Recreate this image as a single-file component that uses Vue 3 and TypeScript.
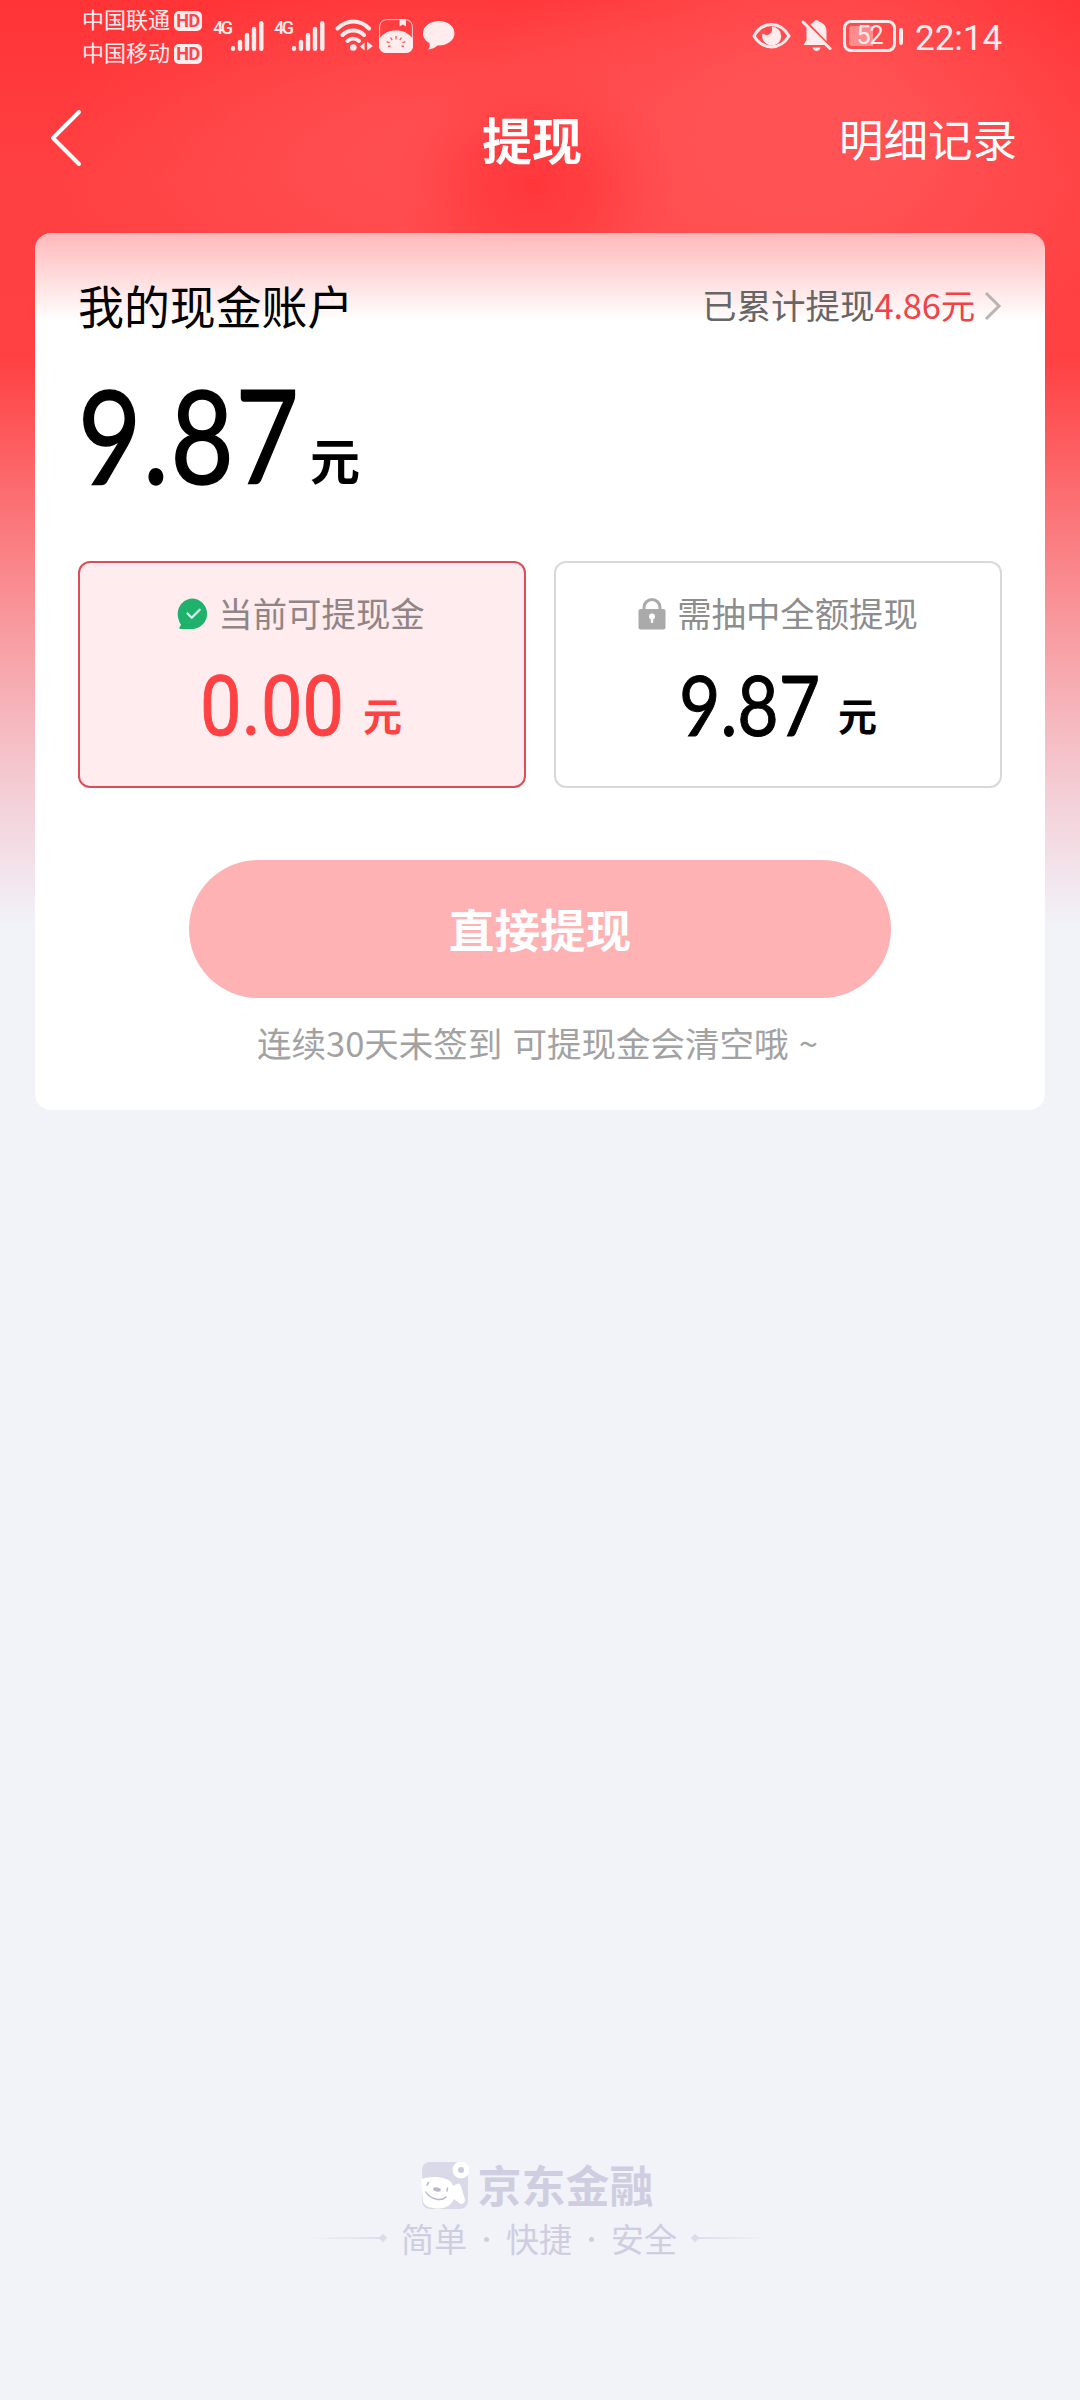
<script setup lang="ts">
interface Account {
  key: string
  label: string
  amount: string
  active: boolean
}

const carriers: string[] = ['中国联通', '中国移动']
const total = '9.87'
const withdrawn = '4.86'
const accounts: Account[] = [
  { key: 'available', label: '当前可提现金', amount: '0.00', active: true },
  { key: 'locked', label: '需抽中全额提现', amount: '9.87', active: false },
]
</script>

<template>
  <main class="page">
    <header class="status">
      <div class="carriers">
        <div v-for="name in carriers" :key="name" class="carrier">
          <span>{{ name }}</span>
          <b class="hd">HD</b>
        </div>
      </div>
      <div v-for="n in 2" :key="n" class="signal">
        <span class="net">4G</span>
        <svg width="35" height="34" viewBox="0 0 35 34" stroke="#ffecec" stroke-width="4.4" stroke-linecap="round">
          <path d="M3 29.8v-.6M10 29.8V23M17 29.8V16M24 29.8V10M31.300 29.800V4.200" />
        </svg>
      </div>
      <svg class="wifi" width="38" height="34" viewBox="0 0 38 34" fill="none" stroke="#ffecec" stroke-width="4" stroke-linecap="round">
        <path d="M2.500 9.500C12 .2 25 .2 34 9.500M7.500 16c6-6 15.500-6 21.500 0M12.500 22c3.500-3 8-3 11.500 0" />
        <circle cx="18.300" cy="28.500" r="3.300" fill="#ffecec" stroke="none" />
        <path d="M29.500 23.500v8l-4.500-4zM32 22.500v9l6-4.500z" fill="#ffecec" stroke="none" />
      </svg>
      <svg class="app" width="34" height="34" viewBox="0 0 34 34">
        <rect x=".6" y=".6" width="32.800" height="32.800" rx="7" fill="none" stroke="#ffd0d0" stroke-width="1" />
        <path d="M0 20C4 14 10 11.500 17 11.500S30 14 34 20v7c0 4-3 7-7 7H7c-4 0-7-3-7-7z" fill="#ffecec" />
        <path d="M20.500 0h6.500v7.500l-3.200-2-3.300 2z" fill="#ffecec" />
        <path d="M17 17v3.500M11.500 18.500l1.700 2.600M22.500 18.500l-1.700 2.600M7.500 22.500l3 1.400M26.500 22.500l-3 1.400M9 27.500l2.500-.5M25 27.500l-2.500-.5" stroke="#f95a5c" stroke-width="1.300" />
      </svg>
      <svg class="bubble" width="32" height="32" viewBox="0 0 32 32">
        <path d="M16 1C7.500 1 0 6.200 0 13.200c0 4.200 2.500 7.800 6.500 10 .8 2.500-.3 4.800-1.300 6.300 3.700-.2 7-1.800 9.300-4C24 25.800 31.500 20.500 31.500 13.200 31.500 6.200 24.500 1 16 1z" fill="#ffecec" />
      </svg>
      <div class="status-right">
        <svg width="39" height="28" viewBox="0 0 39 28">
          <path d="M2 14C11-1.500 28-1.500 37 14 28 28.500 11 28.500 2 14z" fill="none" stroke="#ffecec" stroke-width="3" />
          <path d="M19.500 4.500a9.500 9.500 0 1 1-9 7c2.800 2.500 8 1.500 9.200-1.800.7-2 .3-3.700-.2-5.200z" fill="#ffecec" />
        </svg>
        <svg class="bell" width="31" height="34" viewBox="0 0 31 34">
          <path d="M5.500 9v12L2.500 26h21.300L5.800 8zM9.500 5.500C11 4 12.500 3.200 13 2.500c1-1.800 4-1.800 5 0 5.500 2 7.500 5.500 7.500 10v9.500zM11.500 28.500h8c-.8 4.500-7 4.500-8 0z" fill="#ffecec" />
          <path d="M2 3l27 26.500" stroke="#ffecec" stroke-width="3" stroke-linecap="round" />
        </svg>
        <div class="battery"><span>52</span></div>
        <i class="battery-tip"></i>
        <span class="time">22:14</span>
      </div>
    </header>

    <nav class="nav">
      <svg width="34" height="58" viewBox="0 0 34 58" fill="none" stroke="#fff" stroke-width="4" stroke-linecap="round" stroke-linejoin="round">
        <path d="M30 3L4 29l26 26" />
      </svg>
      <h1>提现</h1>
      <a>明细记录</a>
    </nav>

    <section class="card">
      <div class="head">
        <h2>我的现金账户</h2>
        <div class="history">
          <span>已累计提现</span><em>{{ withdrawn }}元</em>
          <svg width="18" height="30" viewBox="0 0 18 30" fill="none" stroke="#b9b3b3" stroke-width="3">
            <path d="M2 2l13 13L2 28" />
          </svg>
        </div>
      </div>

      <div class="total">
        <div class="digits"><span>{{ total }}</span></div>
        <b>元</b>
      </div>

      <div class="accounts">
        <div v-for="a in accounts" :key="a.key" class="account" :class="{ active: a.active }">
          <div class="label">
            <svg v-if="a.active" width="32" height="32" viewBox="0 0 32 32">
              <path d="M16 .5A15.300 15.300 0 0 1 16 31H3.500c-1.500 0-1.500-1.500-.5-2.500l1-1.800C2 24 .7 20 .7 16A15.300 15.300 0 0 1 16 .5z" fill="#1eb26d" />
              <path d="M10.500 15.500l4.200 4.200 8-8" fill="none" stroke="#e4fbf0" stroke-width="2.200" stroke-linecap="round" stroke-linejoin="round" />
            </svg>
            <svg v-else width="28" height="32" viewBox="0 0 28 32">
              <path d="M6 12V9.500a8 8 0 0 1 16 0V12" fill="none" stroke="#aaa" stroke-width="3" />
              <rect x=".5" y="11" width="27" height="20.500" rx="2" fill="#aaa" />
              <circle cx="14" cy="18.500" r="3" fill="#fff" />
              <path d="M12.800 19h2.400v6h-2.400z" fill="#fff" />
            </svg>
            <span>{{ a.label }}</span>
          </div>
          <div class="amount">
            <div class="digits"><span>{{ a.amount }}</span></div>
            <b>元</b>
          </div>
        </div>
      </div>

      <button class="withdraw">直接提现</button>
      <p class="note">连续30天未签到 可提现金会清空哦 ~</p>
    </section>

    <footer class="footer">
      <div class="brand">
        <svg width="48" height="48" viewBox="0 0 48 48">
          <rect x="1" y="0" width="46" height="47" rx="8" fill="#dad9e7" />
          <path d="M0 17c7-2 16-3 25 0 4 1.500 6 3.500 7 7l4-2c2-1 3 0 4 2l4 14c0 4-4 5-7 2l-4-3c-3 6-8 9.500-15 9.500-8 0-14-2-16-7z" fill="#fff" />
          <circle cx="40" cy="8" r="8.500" fill="#fff" />
          <circle cx="40" cy="8" r="3" fill="#cac9dc" />
          <path d="M6 23l1.500-2.500M26 29l.5-3M5 30c4 7 15 10 20 5" fill="none" stroke="#b9b8cf" stroke-width="1.500" stroke-linecap="round" />
          <ellipse cx="16" cy="27.500" rx="4" ry="2" fill="#b9b8cf" transform="rotate(12 16 27.500)" />
        </svg>
        <b>京东金融</b>
      </div>
      <div class="slogan">
        <i class="line"></i>
        <span>简单</span><u></u><span>快捷</span><u></u><span>安全</span>
        <i class="line flip"></i>
      </div>
    </footer>
  </main>
</template>

<style>
body { background: #f2f2f9; }
</style>

<style scoped>
* { box-sizing: border-box; }
.page {
  width: 1080px;
  height: 2400px;
  display: flex;
  flex-direction: column;
  overflow: hidden;
  font-family: "Noto Sans CJK SC", sans-serif;
  background:
    radial-gradient(ellipse 140px 120px at 535px 185px, rgba(255, 53, 57, .95) 0%, rgba(255, 53, 57, .55) 45%, rgba(255, 53, 57, .15) 80%, rgba(255, 53, 57, 0) 100%),
    radial-gradient(ellipse 340px 250px at 800px 140px, #ff5254 30%, rgba(255, 82, 84, 0) 100%),
    radial-gradient(ellipse 380px 190px at 430px 160px, #ff4e50 20%, rgba(255, 78, 80, 0) 100%),
    linear-gradient(180deg, #ff3437 0, #ff4042 180px, #ff4143 360px, #fd5b5e 440px, #f8989d 620px, #f4cdd5 790px, #f2f2f9 925px);
}
svg { display: block; flex: none; }
.status {
  height: 72px;
  display: flex;
  align-items: flex-start;
  padding: 0 79px 0 82px;
  color: #ffecec;
}
.carriers { display: flex; flex-direction: column; width: 131px; padding-top: 4px; }
.carrier { display: flex; align-items: center; justify-content: space-between; width: 120px; height: 33px; font-size: 22px; white-space: nowrap; }
.carrier span { line-height: 33px; margin-top: -4px; }
.hd {
  width: 28px; height: 20px; border-radius: 5px; background: #ffecec; color: #f9474a;
  font: bold 18px/20px Roboto, sans-serif; text-align: center; letter-spacing: -.5px;
}
.signal { display: flex; width: 61px; padding-top: 19px; }
.net { width: 17px; font: 500 18px/18px Roboto, sans-serif; letter-spacing: -2.500px; }
.wifi { margin: 19px 0 0 0; }
.app { margin: 19px 0 0 6px; }
.bubble { margin: 20px 0 0 10px; }
.status-right { margin-left: auto; display: flex; align-items: flex-start; }
.status-right > svg { margin-top: 22px; }
.status-right > .bell { margin: 19px 11px 0 10px; }
.battery {
  width: 53px; height: 32px; margin-top: 20px; border: 3px solid #ffecec; border-radius: 8px;
  padding: 3px;
}
.battery span {
  display: block; height: 20px; color: #ffecec; text-align: center;
  background: linear-gradient(90deg, rgba(255, 236, 236, .4) 58%, transparent 58%);
  border-radius: 3px; font: 25px/20px Roboto, sans-serif; letter-spacing: -1px;
}
.battery-tip { width: 4px; height: 17px; margin: 28px 12px 0 3px; border-radius: 2px; background: #ffecec; }
.time { font: 35px/38px Roboto, sans-serif; margin-top: 20px; width: 86px; white-space: nowrap; }
.nav {
  height: 161px; display: flex; align-items: flex-start; padding: 0 63px 0 49px; color: #fff;
}
.nav svg { margin-top: 37px; }
.nav h1 { margin: 36px 0 0 399px; font-size: 50px; line-height: 60px; font-weight: 700; }
.nav a { margin: 36px 0 0 auto; font-size: 44.500px; line-height: 60px; }
.card {
  width: 1010px; height: 877px; margin: 0 auto; padding: 41px 43px 0;
  border-radius: 16px; display: flex; flex-direction: column;
  background: linear-gradient(180deg, #ffb8ba 0, #fff 88px);
}
.head { height: 60px; display: flex; justify-content: space-between; align-items: center; }
h2 { margin: 0; font-size: 45.900px; font-weight: 400; color: #000; line-height: 60px; }
.history { display: flex; align-items: center; font-size: 34.500px; line-height: 60px; color: #666; }
.history em { font-style: normal; color: #ee4347; letter-spacing: -.2px; }
.history svg { margin: 4px 0 0 9px; }
.total { height: 200px; margin-top: 27px; display: flex; align-items: flex-start; color: #000; }
.digits { font-family: Lato, sans-serif; }
.digits span { display: block; width: max-content; transform: scaleX(.86); transform-origin: left; }
.total .digits { width: 231px; font-size: 130px; line-height: 146px; letter-spacing: 2px; -webkit-text-stroke: 1.500px #000; }
.total .digits span { transform: scaleX(.84); }
.total b { font-size: 50px; line-height: 60px; font-weight: 700; margin: 67px 0 0 1px; }
.accounts { display: flex; justify-content: space-between; }
.account {
  width: 448px; height: 227px; border: 2px solid #d9d9d9; border-radius: 12px; background: #fff;
  display: flex; flex-direction: column; align-items: center;
}
.account.active { background: #ffecee; border-color: #dc4d58; }
.label { display: flex; align-items: center; gap: 11px; height: 50px; margin-top: 26px; font-size: 34.400px; color: #8d8d8d; white-space: nowrap; }
.label span { line-height: 50px; margin-top: -4px; }
.active .label { color: #8f8586; gap: 9px; margin-right: 2px; }
.amount { display: flex; margin-top: 16px; color: #000; }
.amount .digits { width: 139px; font-size: 83px; line-height: 98px; -webkit-text-stroke: 1px #000; }
.amount b { font-size: 39px; line-height: 50px; margin: 34px 0 0 20px; }
.active .amount { color: #ff4144; margin-right: 2px; }
.active .amount .digits { width: 143px; font-family: Roboto, sans-serif; line-height: 103px; -webkit-text-stroke: 1px #ff4144; }
.active .amount .digits span { transform: scaleX(.89); }
.withdraw {
  width: 702px; height: 138px; margin: 72px auto 0; border: 0; border-radius: 69px;
  background: #ffb2b4; color: #fff; font: 700 45.600px/136px "Noto Sans CJK SC", sans-serif; padding: 0 0 2px;
}
.note { margin: 19px 0 0; padding-right: 5px; text-align: center; font-size: 34.500px; line-height: 50px; word-spacing: 2.500px; color: #a2a2a2; white-space: nowrap; }
.footer { margin-top: 1044px; display: flex; flex-direction: column; align-items: center; color: #cfcee0; }
.brand { display: flex; height: 60px; align-items: center; gap: 9px; margin-right: 6px; }
.brand svg { margin-top: 3px; }
.brand b { font-size: 44px; line-height: 60px; font-weight: 700; }
.slogan { display: flex; align-items: center; height: 46px; font-size: 33px; line-height: 46px; margin: 1px 2px 0 0; }
.slogan u { width: 5px; height: 5px; border-radius: 50%; background: #cfcee0; margin: 2px 17px 0; }
.line { position: relative; width: 76px; height: 2px; margin-right: 15px; background: linear-gradient(90deg, transparent, #dcdbe8); }
.line::after { content: ""; position: absolute; right: 0; top: -2px; width: 6px; height: 6px; background: #dcdbe8; transform: rotate(45deg); }
.line.flip { margin: 0 0 0 15px; transform: scaleX(-1); }
</style>
